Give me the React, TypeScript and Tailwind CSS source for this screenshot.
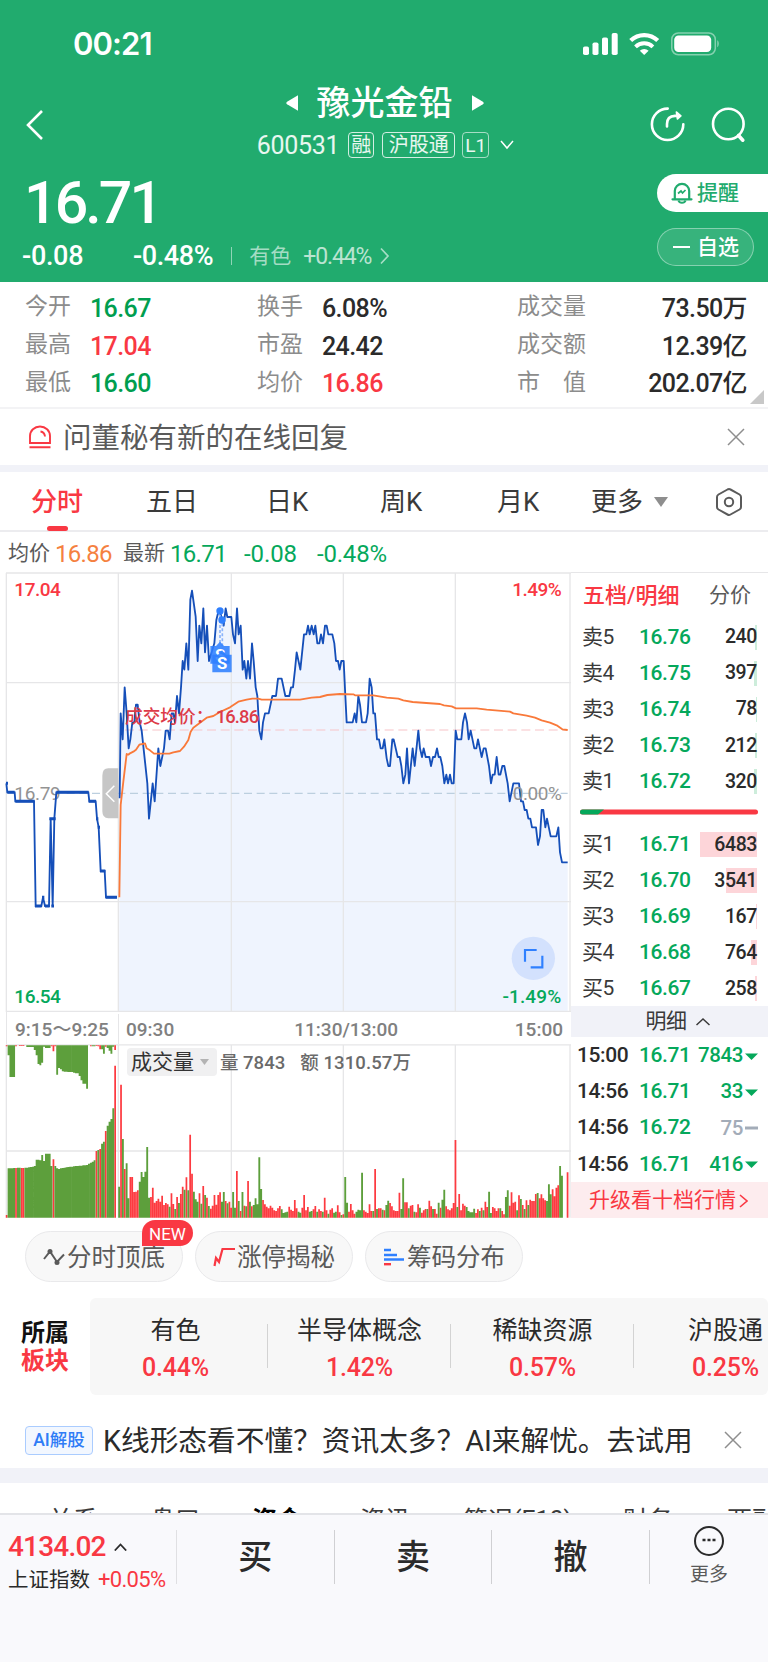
import { useMemo } from 'react';
import clsx from 'clsx';

type Tone = 'up' | 'down' | 'flat';

const TONE: Record<Tone, string> = {
  up: 'text-[#f93843]',
  down: 'text-[#009e4f]',
  flat: 'text-[#2b2b2b]',
};

const STATS: { label: string; value: string; tone: Tone }[][] = [
  [
    { label: '今开', value: '16.67', tone: 'down' },
    { label: '换手', value: '6.08%', tone: 'flat' },
    { label: '成交量', value: '73.50万', tone: 'flat' },
  ],
  [
    { label: '最高', value: '17.04', tone: 'up' },
    { label: '市盈', value: '24.42', tone: 'flat' },
    { label: '成交额', value: '12.39亿', tone: 'flat' },
  ],
  [
    { label: '最低', value: '16.60', tone: 'down' },
    { label: '均价', value: '16.86', tone: 'up' },
    { label: '市 值', value: '202.07亿', tone: 'flat' },
  ],
];

const ASKS = [
  { label: '卖5', price: '16.76', volume: 240, bar: 2 },
  { label: '卖4', price: '16.75', volume: 397, bar: 3.5 },
  { label: '卖3', price: '16.74', volume: 78, bar: 1 },
  { label: '卖2', price: '16.73', volume: 212, bar: 2 },
  { label: '卖1', price: '16.72', volume: 320, bar: 3 },
];

const BIDS = [
  { label: '买1', price: '16.71', volume: 6483, bar: 57 },
  { label: '买2', price: '16.70', volume: 3541, bar: 31 },
  { label: '买3', price: '16.69', volume: 167, bar: 1 },
  { label: '买4', price: '16.68', volume: 764, bar: 6.5 },
  { label: '买5', price: '16.67', volume: 258, bar: 2 },
];

const TICKS = [
  { time: '15:00', price: '16.71', volume: 7843, down: true },
  { time: '14:56', price: '16.71', volume: 33, down: true },
  { time: '14:56', price: '16.72', volume: 75, down: false },
  { time: '14:56', price: '16.71', volume: 416, down: true },
];

const SECTORS = [
  { name: '有色', change: '0.44%' },
  { name: '半导体概念', change: '1.42%' },
  { name: '稀缺资源', change: '0.57%' },
  { name: '沪股通', change: '0.25%' },
];

// Chart coordinates are 3 units per pixel.
const AUCTION_LINE =
  '19,655 22,682 44,682 46,709 102,709 107,1023 124,1023 129,997 135,1023 147,1023 152,761 158,1023 163,761 169,682 265,682 268,709 287,709 291,761 296,787 302,918 314,918 318,997 350,997';

const PRICE_LINE =
  '359,700 362,445 368,523 374,367 380,445 386,550 391,523 397,472 403,472 408,419 413,419 419,472 425,497 442,655 447,761 458,655 464,709 475,550 481,603 492,550 497,497 504,497 509,523 515,445 520,445 525,472 531,393 537,445 543,367 548,288 553,314 559,235 565,314 571,104 576,77 587,155 593,288 598,182 604,235 610,130 615,262 621,182 627,288 635,262 643,235 649,165 655,140 660,138 666,165 671,182 677,130 682,156 694,156 699,208 705,235 711,130 716,208 722,182 728,314 733,288 739,341 744,288 750,341 756,235 761,288 767,367 772,393 778,497 784,523 789,472 795,445 806,445 817,393 828,393 834,341 845,341 856,393 868,393 873,367 879,367 885,314 890,262 901,314 912,208 919,208 924,182 929,208 935,182 941,208 946,182 952,235 958,235 963,208 969,235 975,182 980,182 985,208 997,208 1003,235 1008,288 1014,288 1019,314 1024,288 1031,288 1036,393 1040,472 1058,472 1064,445 1069,472 1075,393 1080,419 1086,472 1098,472 1103,445 1109,341 1115,367 1120,445 1125,445 1131,523 1137,523 1142,550 1148,550 1153,523 1160,580 1165,603 1170,603 1177,523 1181,523 1193,576 1199,576 1204,603 1210,655 1216,629 1221,550 1227,655 1238,550 1244,603 1255,497 1260,550 1266,576 1271,550 1277,576 1288,576 1293,603 1299,576 1305,576 1311,550 1316,576 1321,576 1327,603 1333,655 1339,629 1344,655 1350,629 1355,655 1361,655 1367,497 1372,523 1384,523 1389,472 1395,445 1401,472 1406,523 1412,497 1423,550 1429,550 1434,523 1445,576 1451,550 1457,550 1467,603 1473,655 1478,629 1484,629 1490,576 1496,629 1501,629 1507,603 1513,603 1523,655 1529,709 1540,655 1557,655 1563,709 1569,709 1574,735 1580,735 1585,761 1591,761 1596,787 1608,787 1614,840 1620,814 1625,735 1630,735 1636,787 1641,761 1652,814 1669,814 1675,787 1680,862 1686,892 1703,892';

const AVERAGE_LINE =
  '358,997 362,720 370,650 380,567 385,569 390,565 400,560 408,554 418,539 427,537 435,535 440,550 450,556 462,566 508,566 520,562 540,558 552,545 565,525 572,500 580,488 600,473 620,458 640,453 660,441 690,427 715,410 740,404 757,401 775,401 785,404 900,404 935,398 960,396 982,390 1020,387 1060,388 1065,391 1120,391 1160,398 1195,401 1210,406 1238,411 1320,417 1332,421 1355,424 1368,430 1430,430 1460,434 1530,440 1540,445 1580,452 1605,458 1625,466 1650,473 1670,481 1687,493 1703,495';

// One entry per minute: positive is an up bar, negative a down bar.
const VOLUME = [
  -93, 399, -236, 146, -163, -58, 122, 122, 77, 78, 82, -108, -137, -122, -138, -212, -60, 62, 90, 45,
  50, 57, 48, 66, 38, 44, 40, -33, 73, 41, -26, 62, -44, 71, 93, -84, 121, -82, 249, 132,
  -78, -55, -48, 73, -42, 95, -68, 60, -35, 27, 36, 68, 39, 68, 76, -48, -77, 50, -43, 48,
  30, -77, -30, 140, -50, 20, -77, 36, -34, 110, -48, 34, -38, -58, -40, -181, -86, 53, 40, 33,
  28, 36, 30, 22, 20, 28, 35, -25, -14, -16, -18, 33, 24, 20, 53, 28, -18, -15, 30, 68,
  22, 32, -18, -20, 25, 35, -18, 25, 20, -18, 60, 22, -12, 24, 28, -15, -18, 37, 16, -8,
  10, -122, -45, 18, 41, 22, 12, -18, -24, -22, -135, 22, 18, 14, 40, 20, -20, 146, -26, 28,
  28, -24, 22, -38, -51, 44, 34, 22, 20, 20, 75, -26, -118, 46, 46, -28, 36, 38, -18, 16,
  40, -30, 15, 22, 26, -26, 51, 34, -26, 26, 12, -45, 30, -54, -84, 34, 25, 22, 28, 44,
  233, -32, 71, 22, 42, 36, -32, -20, -16, -16, -27, 14, 25, -20, 30, -22, 48, 32, -78, -14,
  32, 28, 20, 28, -28, 20, 10, -62, -82, 36, 76, 45, 48, -22, 67, -56, 38, -26, 52, -38,
  54, 50, 50, 71, -74, 58, 70, 58, 52, -50, -100, -70, 85, 64, 90, 97, -155, -126, 0, 0,
  136,
];

const AUCTION_MATCHED = [
  8, -148, -148, -148, -149, 149, -150, -150, 149, 149, -150, -150, -151, -152, -153, -155, -174, -174, -172, -188,
  -170, -192, -192, -192, -155, 175, -155, -148, -146, -148, -149, -150, -151, -152, -153, -153, -154, -155, -155, -156,
  -156, -157, -157, -158, -162, -165, -168, -172, 200, -203, 206, -222, -228, 260, -276, -288, -296, -328, 456,
];

const AUCTION_UNMATCHED = [
  3, -30, -95, -95, -95, 3, 0, 2, 2, 2, 0, -5, -5, -5, -5, -14, -30, -56, -60, -52,
  -4, -8, -8, -8, 3, 18, 3, -88, -68, -72, -78, -79, -79, -80, -80, -80, -82, -84, -84, -92,
  -105, -115, -115, -130, 0, 3, -3, -3, 2, 3, 12, -12, -25, 4, -8, -16, -25, -4, 14,
];

function bars(values: number[], x0: number, step: number, y: number, dir: 1 | -1, up: boolean) {
  return values
    .map((v, i) => ((up ? v > 0 : v < 0) ? `M${(x0 + i * step).toFixed(1)} ${y}v${dir * Math.abs(v)}` : ''))
    .join('');
}

function StatusBar() {
  return (
    <div className="flex h-[88px] items-center justify-between pl-[73px] pr-[49px]">
      <span className="-mt-[2px] font-['Inter'] text-[31px] font-semibold leading-none tracking-[-0.9px]">00:21</span>
      <svg width="138" height="24" viewBox="0 0 138 24" fill="#fff">
        <rect x="2" y="14.500" width="6" height="8.500" rx="1.800" />
        <rect x="11.500" y="10.500" width="6" height="12.500" rx="1.800" />
        <rect x="21" y="5.500" width="6" height="17.500" rx="1.800" />
        <rect x="30.700" y="1" width="6" height="22" rx="1.800" />
        <path d="M63.200 23 58.800 18.700a6.300 6.300 0 0 1 8.800 0z" />
        <path d="M54.500 14.800a12.400 12.400 0 0 1 17.400 0" fill="none" stroke="#fff" strokeWidth="3.900" />
        <path d="M49.700 8.600a19.300 19.300 0 0 1 27 0" fill="none" stroke="#fff" strokeWidth="4.200" />
        <rect x="90.800" y="1" width="43.500" height="21.800" rx="6.500" fill="none" stroke="#fff" strokeOpacity=".45" strokeWidth="1.500" />
        <rect x="93.200" y="3.500" width="37" height="16.600" rx="4.300" />
        <path d="M136.300 8.200v7c1.800-.6 2-6.300 0-7z" fillOpacity=".5" />
      </svg>
    </div>
  );
}

function Header() {
  return (
    <header className="h-[282px] bg-[#21ab6e] text-white">
      <StatusBar />
      <div className="flex h-[77px] items-start">
        <svg className="ml-[24px] mt-[21px]" width="22" height="32" viewBox="0 0 22 32" fill="none" stroke="#fff" strokeWidth="2.600">
          <path d="M18 2 4 16l14 14" />
        </svg>
        <div className="ml-[150px] flex w-[382px] flex-col items-center">
          <div className="-ml-[5px] flex h-[30px] items-center gap-[19px]">
            <svg width="12" height="18" viewBox="0 0 11 16" fill="#fff"><path d="M11 1v14L1 9.200Q-.5 8 1 6.800z" /></svg>
            <h1 className="text-[34px] font-medium leading-[32px]">豫光金铅</h1>
            <svg width="12" height="18" viewBox="0 0 11 16" fill="#fff"><path d="M0 1v14l10-5.800q1.500-1.200 0-2.400z" /></svg>
          </div>
          <div className="mt-[14px] -ml-[2px] flex h-[26px] items-center text-[20px] leading-none text-white/90">
            <span className="mt-px text-[25px] tracking-[-0.3px]">600531</span>
            <span className="ml-[9px] flex h-[26px] w-[26px] items-center justify-center rounded border border-white/80">融</span>
            <span className="ml-[8px] flex h-[26px] w-[73px] items-center justify-center rounded border border-white/80">沪股通</span>
            <span className="ml-[7px] flex h-[26px] w-[27px] items-center justify-center rounded border border-white/60 text-[19px]">L1</span>
            <svg className="ml-[10px]" width="16" height="12" viewBox="0 0 16 12" fill="none" stroke="#fff" strokeWidth="1.500">
              <path d="m2 2 6 7 6-7" />
            </svg>
          </div>
        </div>
        <svg className="ml-[71px] mt-[18px]" width="100" height="38" viewBox="0 0 100 38" fill="none" stroke="#fff" strokeWidth="2.600" strokeLinecap="round">
          <path d="M18.700 2.600A15.700 15.700 0 1 0 34.300 18.300" />
          <path d="M18 20.500v-2.500q0-7.700 8-8.100h4" />
          <path d="M27.500 6.200 31.800 9.900 28.500 12.800z" fill="#fff" strokeWidth="1.800" strokeLinejoin="round" />
          <circle cx="79.300" cy="18" r="15.300" />
          <path d="m89.500 29.500 4.300 4.700" strokeWidth="3.600" />
        </svg>
      </div>
      <div className="flex">
        <div className="flex-1">
          <div className="mt-[11px] pl-[24px] text-[59px] font-medium leading-[54px] tracking-[-2.9px]">16.71</div>
          <div className="mt-[14px] flex h-[24px] items-center pl-[22px] leading-none">
            <span className="w-[111px] text-[27px] font-medium tracking-[-0.3px]">-0.08</span>
            <span className="text-[27px] font-medium tracking-[-0.4px]">-0.48%</span>
            <span className="ml-[18px] h-[18px] w-px bg-white/50" />
            <span className="ml-[17px] text-[21px] text-white/60">有色</span>
            <span className="ml-[12px] text-[23px] tracking-[-1.1px] text-white/70">+0.44%</span>
            <svg className="ml-[8px]" width="12" height="18" viewBox="0 0 12 18" fill="none" stroke="#fff" strokeOpacity=".6" strokeWidth="1.700">
              <path d="m2 1.500 7 7.500-7 7.500" />
            </svg>
          </div>
        </div>
        <div className="flex w-[111px] flex-col text-[21px] font-medium leading-none">
          <div className="mt-[9px] flex h-[38px] items-center rounded-l-full bg-white pl-[14px] text-[#21ab6e]">
            <svg width="22" height="24" viewBox="0 0 22 24" fill="none" stroke="#21ab6e" strokeWidth="2.200">
              <path d="M3.800 18V10a7.200 7.200 0 0 1 14.400 0v8M1.500 18.300h19" strokeLinecap="round" />
              <path d="M7.500 19.500c1 3 6 3 7 0" />
              <path d="m7 12.500 3-2.500 1.500 2 3-3" strokeWidth="1.700" />
            </svg>
            <span className="ml-[4px]">提醒</span>
          </div>
          <div className="mt-[16px] flex h-[38px] w-[97px] items-center rounded-full border-[1.5px] border-white/40 bg-white/10 pl-[15px]">
            <span className="h-[2px] w-[17px] bg-white" />
            <span className="ml-[7px]">自选</span>
          </div>
        </div>
      </div>
    </header>
  );
}

function Stats() {
  return (
    <section className="relative h-[127px] border-b-2 border-[#f3f3f5] pt-[6px] text-[23px] leading-none">
      {STATS.map((row) => (
        <div key={row[0].label} className="flex h-[37.800px] items-center pl-[25px] pr-[21px]">
          {row.map((cell, i) => (
            <div key={cell.label} className={clsx('flex items-center', i === 0 && 'w-[232px]', i === 1 && 'w-[260px]', i === 2 && 'flex-1 justify-between')}>
              <span className={clsx('flex text-[#8c8c8c]', i < 2 && 'w-[65px]', i === 2 && 'w-[69px] justify-between')}>
                {cell.label.split(' ').map((part) => <span key={part}>{part}</span>)}
              </span>
              <span className={clsx('mt-[3px] text-[25px] font-medium tracking-[-0.6px]', TONE[cell.tone])}>{cell.value}</span>
            </div>
          ))}
        </div>
      ))}
      <svg className="absolute bottom-[3px] right-[4px]" width="14" height="14" fill="#c8c8c8"><path d="M14 0v14H0z" /></svg>
    </section>
  );
}

function CloseIcon() {
  return (
    <svg width="18" height="18" viewBox="0 0 18 18" stroke="#8e8e8e" strokeWidth="1.500">
      <path d="m1 1 16 16M17 1 1 17" />
    </svg>
  );
}

function Notice() {
  return (
    <section className="flex h-[56px] items-center pl-[28px] pr-[23px]">
      <svg width="24" height="24" viewBox="0 0 24 24" fill="none" stroke="#f93843" strokeWidth="1.900">
        <path d="M2 18V11a10 9.500 0 0 1 20 0v7z" />
        <path d="M12.500 6.500q4 .5 4.500 5M1.500 22.300h21" />
      </svg>
      <span className="ml-[11px] mt-[4px] flex-1 text-[28.500px] leading-none text-[#5a5a5a]">问董秘有新的在线回复</span>
      <CloseIcon />
    </section>
  );
}

function PeriodTabs() {
  return (
    <nav className="flex h-[60px] items-center border-b-2 border-[#ececef] pl-[31px] pt-[2px] text-[26px] leading-none text-[#3a3a3a]">
      <span className="relative w-[115px] font-medium text-[#f93843]">
        分时
        <span className="absolute left-[16px] top-[37px] h-[5px] w-[21px] rounded-full bg-[#f93843]" />
      </span>
      <span className="w-[120px]">五日</span>
      <span className="w-[114px]">日K</span>
      <span className="w-[117px]">周K</span>
      <span className="w-[94px]">月K</span>
      <span>更多</span>
      <svg className="ml-[11px]" width="14" height="10" fill="#8e8e8e"><path d="M0 0h14L7 10z" /></svg>
      <svg className="ml-[47px]" width="28" height="30" viewBox="0 0 28 30" fill="none" stroke="#5a5a5a" strokeWidth="2">
        <path d="M12.500 2.500q1.500-.8 3 0l9 5q1.500.9 1.500 2.600v9.800q0 1.700-1.500 2.600l-9 5q-1.500.8-3 0l-9-5Q2 21.600 2 19.900v-9.800q0-1.700 1.500-2.600z" />
        <circle cx="14" cy="15" r="4.200" />
      </svg>
    </nav>
  );
}

function InfoLine() {
  return (
    <div className="flex h-[41px] items-center pl-[8px] pt-[2px] text-[24px] leading-none tracking-[-0.7px] text-[#05a85b]">
      <span className="text-[21px] tracking-normal text-[#5a5a5a]">均价</span>
      <span className="ml-[5px] w-[68px] text-[#f5813f]">16.86</span>
      <span className="text-[21px] tracking-normal text-[#5a5a5a]">最新</span>
      <span className="ml-[5px] w-[74px]">16.71</span>
      <span className="w-[73px] tracking-[-0.1px]">-0.08</span>
      <span className="tracking-[-0.2px]">-0.48%</span>
    </div>
  );
}

function SellMarker({ x, y }: { x: number; y: number }) {
  return (
    <g transform={`translate(${x} ${y})`}>
      <path d="M-29 5H-12L0 -8 12 5H29V58H-29z" fill="#2f80ff" fillOpacity=".88" />
      <text x="0" y="49" textAnchor="middle" className="fill-white text-[50px] font-bold">S</text>
    </g>
  );
}

function PriceChart() {
  return (
    <svg width="571" height="440" viewBox="0 21 1713 1320" className="block" fill="none">
      <path d={`M357 1340 ${PRICE_LINE} 1703,1340z`} fill="#eff4fe" />
      <g stroke="#e6e6e8" strokeWidth="4">
        <path d="M18 24H1713M18 353H1713M18 1010H1713M18 1339H1713" />
        <path d="M19 24V1341M355 24V1341M694 24V1341M1030 24V1341M1366 24V1341M1710 24V1341" />
      </g>
      <path d="M200 685H1703" stroke="#bccfdf" strokeWidth="3.500" strokeDasharray="24 14" />
      <path d="M375 495H1703" stroke="#f7c3c8" strokeWidth="3.500" strokeDasharray="27 14" />
      <text x="43" y="705" className="fill-[#939393] text-[57px] tracking-[-1px]">16.79</text>
      <polyline points={AUCTION_LINE} stroke="#154fb9" strokeWidth="5.500" />
      <path d="M18 655h6M22 682h22M46 709h58M105 1023h20M126 997h7M135 1023h14M148 761h19M154 1023h8M169 682h97M266 709h22M288 761h7M293 787h7M300 918h16M317 997h34" stroke="#154fb9" strokeWidth="9" />
      <path d="M355 610H325Q307 610 307 632V738Q307 760 325 760H355z" fill="#c6c6c6" />
      <path d="M343 662 319 686 343 710" stroke="#fff" strokeWidth="4.500" />
      <polyline points={PRICE_LINE} stroke="#154fb9" strokeWidth="5.500" strokeLinejoin="round" />
      <polyline points={AVERAGE_LINE} stroke="#f9793a" strokeWidth="5.500" strokeLinejoin="round" />
      <path d="M660 150V235M667 175V262" stroke="#8bb4fb" strokeWidth="5" strokeDasharray="9 6" />
      <circle cx="660" cy="138" r="11" fill="#2f80ff" />
      <circle cx="666" cy="165" r="11" fill="#2f80ff" />
      <SellMarker x={660} y={238} />
      <SellMarker x={666} y={264} />
      <text x="375" y="473" className="fill-[#dd3b48] text-[53px] font-medium">成交均价：</text>
      <text x="647" y="473" className="fill-[#dd3b48] text-[55px] font-medium tracking-[-2.500px]">16.86</text>
      <g className="text-[57px] font-medium tracking-[-1.500px]">
        <text x="43" y="93" className="fill-[#f93843]">17.04</text>
        <text x="43" y="1315" className="fill-[#05a85b]">16.54</text>
        <g textAnchor="end">
          <text x="1684" y="94" className="fill-[#f93843]">1.49%</text>
          <text x="1684" y="705" className="fill-[#939393] font-normal">0.00%</text>
          <text x="1684" y="1315" className="fill-[#05a85b] tracking-[0.4px]">-1.49%</text>
        </g>
      </g>
      <circle cx="1600" cy="1180" r="65" fill="#d3e1fd" />
      <path d="M1610 1155H1575V1190M1592 1207H1627V1172" stroke="#2f80ff" strokeWidth="6.500" />
    </svg>
  );
}

function VolumeChart() {
  const paths = useMemo(() => {
    const build = (up: boolean) =>
      bars(VOLUME, 357.5, 5.605, 638, -1, up) +
      bars(AUCTION_MATCHED, 20, 5.61, 638, -1, up) +
      bars(AUCTION_UNMATCHED, 20, 5.61, 121, 1, up);
    return { up: build(true), down: build(false) };
  }, []);

  return (
    <div className="relative h-[174px]">
      <svg width="571" height="174" viewBox="0 117 1713 522" className="block" fill="none">
        <path d="M18 119.500H1713M18 438H1713M19 119V638M355 119V638M694 119V638M1030 119V638M1366 119V638M1710 119V638" stroke="#e6e6e8" strokeWidth="4" />
        <path d={paths.up} stroke="#fd3a40" strokeWidth="5.200" />
        <path d={paths.down} stroke="#5d9f3c" strokeWidth="5.600" />
      </svg>
      <div className="absolute left-[127px] top-[4px] flex items-center leading-none text-[#6a6a6a]">
        <span className="flex h-[28px] w-[90px] items-center rounded bg-[#f0f0f1] pl-[4px] text-[21px] text-[#333]">
          成交量
          <svg className="ml-[6px]" width="9" height="6" fill="#b3b3b3"><path d="M0 0h9L4.500 6z" /></svg>
        </span>
        <span className="ml-[3px] mt-[2px] text-[18.500px] font-medium">量 7843</span>
        <span className="ml-[15px] mt-[2px] text-[18.500px] font-medium tracking-[0.1px]">额 1310.57万</span>
      </div>
    </div>
  );
}

function OrderRow({ label, price, volume, bar, ask }: { label: string; price: string; volume: number; bar: number; ask?: boolean }) {
  return (
    <div className="flex h-[36.100px] items-center pl-[11px] pr-[11px] pt-[2px]">
      <span className="w-[57px] text-[#3a3a3a]">{label}</span>
      <span className="font-medium text-[#05a85b]">{price}</span>
      <span className="relative ml-auto flex h-[25px] items-center justify-end font-medium text-[#2b2b2b]">
        <span className={clsx('absolute inset-y-0 right-0', ask ? 'bg-[#cdeddb]' : 'bg-[#fdd5d9]')} style={{ width: bar }} />
        <span className="relative text-[19.500px] tracking-[-0.4px]">{volume}</span>
      </span>
    </div>
  );
}

function OrderBook() {
  return (
    <aside className="flex h-[646px] w-[197px] flex-col border-t border-[#e6e6e8] text-[21px] leading-none tracking-[-0.4px]">
      <div className="flex h-[45px] items-center pl-[12px] tracking-normal">
        <span className="w-[126px] text-[22px] font-medium text-[#f93843]">五档/明细</span>
        <span className="text-[#5a5a5a]">分价</span>
      </div>
      {ASKS.map((row) => <OrderRow key={row.label} {...row} ask />)}
      <div className="flex h-[27px] items-center pl-[9px]">
        <svg width="178" height="6">
          <rect y=".5" width="178" height="5" rx="2.500" fill="#f93843" />
          <path d="M2.500 .5H24L18 5.500H2.500a2.500 2.500 0 0 1 0-5z" fill="#05a85b" />
        </svg>
      </div>
      {BIDS.map((row) => <OrderRow key={row.label} {...row} />)}
      <div className="flex h-[31px] items-center justify-center bg-[#f1f2f8] pl-[16px] text-[#3a3a3a]">
        明细
        <svg className="ml-[9px]" width="14" height="9" viewBox="0 0 14 9" fill="none" stroke="#3a3a3a" strokeWidth="1.500"><path d="m.5 8 6.500-6 6.500 6" /></svg>
      </div>
      {TICKS.map((tick, i) => (
        <div key={i} className="flex h-[36.200px] items-center pl-[6px] pr-[10px] pt-px font-medium">
          <span className="w-[62px] text-[#2b2b2b]">{tick.time}</span>
          <span className="text-[#05a85b]">{tick.price}</span>
          <span className={clsx('ml-auto text-[20.500px]', tick.down ? 'text-[#05a85b]' : 'text-[#a3acb8]')}>{tick.volume}</span>
          <svg className="ml-[2px]" width="13" height="8" viewBox="0 0 13 8">
            {tick.down ? <path d="M0 1.500h13L6.500 8z" fill="#05a85b" /> : <path d="M0 2.500h13v3H0z" fill="#a3acb8" />}
          </svg>
        </div>
      ))}
      <div className="flex flex-1 items-center bg-[#fdecee] pl-[18px] pt-[2px] tracking-normal text-[#f93843]">
        升级看十档行情
        <svg className="ml-[3px]" width="9" height="14" viewBox="0 0 9 14" fill="none" stroke="#f93843" strokeWidth="1.600"><path d="m1 1 7 6-7 6" /></svg>
      </div>
    </aside>
  );
}

function Market() {
  return (
    <section className="flex">
      <div className="w-[571px]">
        <PriceChart />
        <div className="ml-[6px] flex h-[32px] items-center border-l border-[#e6e6e8] pt-[2px] text-[19px] font-medium leading-none text-[#808080]">
          <span className="h-full w-[112px] whitespace-nowrap border-r border-[#e6e6e8] pl-[8px] leading-[31px]">9:15～9:25</span>
          <span className="pl-[7px]">09:30</span>
          <span className="ml-[120px]">11:30/13:00</span>
          <span className="ml-auto pr-[8px]">15:00</span>
        </div>
        <VolumeChart />
      </div>
      <OrderBook />
    </section>
  );
}

function Shortcuts() {
  const pill = 'relative flex h-[51px] w-[158px] items-center rounded-full border border-[#e9e9eb] bg-[#f8f8f8] pl-[17px]';
  return (
    <section className="flex h-[80px] gap-[12px] pl-[25px] pt-[13px] text-[24.500px] leading-none text-[#5a5a5a]">
      <div className={pill}>
        <svg width="22" height="18" viewBox="0 0 22 18" fill="none" stroke="#5a5a5a" strokeWidth="2">
          <path d="M1 11 7 3.500l7 10.500 7-7.500" />
          <circle cx="7" cy="3.500" r="2.500" fill="#5a5a5a" stroke="none" />
          <circle cx="14" cy="14.500" r="2.500" fill="#5a5a5a" stroke="none" />
        </svg>
        <span className="ml-[2px] mt-[3px]">分时顶底</span>
        <span className="absolute -top-[12px] left-[116px] flex h-[26px] w-[51px] items-center justify-center rounded-full rounded-bl-none bg-[#f93843] pt-[2px] text-[17px] text-white">NEW</span>
      </div>
      <div className={pill}>
        <svg width="22" height="20" viewBox="0 0 22 20" fill="none" stroke="#f93843" strokeWidth="2.200">
          <path d="M1.500 19 3 11l3 4L9.500 2H22" />
        </svg>
        <span className="ml-[2px] mt-[3px]">涨停揭秘</span>
      </div>
      <div className={pill}>
        <svg width="22" height="18" viewBox="0 0 22 18" strokeWidth="2.400">
          <path d="M1 2h7M1 7h13M1 11.500h20" stroke="#2f80ff" />
          <path d="M1 16.200h7" stroke="#f93843" />
        </svg>
        <span className="ml-[2px] mt-[3px]">筹码分布</span>
      </div>
    </section>
  );
}

function Sectors() {
  return (
    <section className="flex h-[97px]">
      <div className="flex w-[90px] flex-col pl-[21px] pt-[21px] text-[24px] font-bold leading-[28px] text-[#111]">
        <span>所属</span>
        <span className="text-[#f93843]">板块</span>
      </div>
      <div className="flex flex-1 overflow-hidden rounded-md bg-[#f7f7f7]">
        {SECTORS.map((sector, i) => (
          <div key={sector.name} className={clsx('relative flex shrink-0 flex-col items-center text-[25px] leading-none', i === 0 ? 'w-[178px] pr-[7px]' : 'w-[183px]')}>
            <span className="mt-[20px] text-[#2b2b2b]">{sector.name}</span>
            <span className="mt-[12px] font-medium tracking-[-0.2px] text-[#f93843]">{sector.change}</span>
            <span className="absolute right-0 top-[26px] h-[44px] w-px bg-[#d3d3d3]" />
          </div>
        ))}
      </div>
    </section>
  );
}

function AiPrompt() {
  return (
    <section className="flex h-[73px] items-center pl-[25px] leading-none">
      <span className="mt-[17px] flex h-[29px] w-[68px] items-center justify-center rounded border-[1.5px] border-[#aaccff] bg-[#f2f7ff] pt-px text-[17.500px] font-medium text-[#2f7cf6]">AI解股</span>
      <span className="ml-[10px] mt-[20px] w-[612px] whitespace-nowrap text-[28.700px] text-[#2b2b2b]">K线形态看不懂？资讯太多？AI来解忧。去试用</span>
      <span className="ml-[9px] mt-[16px]"><CloseIcon /></span>
    </section>
  );
}

function SectionTabs() {
  return (
    <nav className="flex h-[30px] items-start overflow-hidden whitespace-nowrap pl-[48px] pt-[25px] text-[25px] leading-none text-[#3a3a3a] *:shrink-0">
      <span className="w-[102px]">关系</span>
      <span className="w-[102px]">盘口</span>
      <span className="w-[108px] font-bold text-black">资金</span>
      <span className="w-[103px]">资讯</span>
      <span className="w-[160px]">简况(F10)</span>
      <span className="w-[104px]">财务</span>
      <span>两融</span>
    </nav>
  );
}

function TradeBar() {
  return (
    <footer className="flex h-[149px] items-start border-t-2 border-[#e3e4e8] bg-[#f9f9fc] pt-[15px] leading-none">
      <div className="h-[54px] w-[177px] border-r border-[#e0e0e3] pl-[8px]">
        <div className="mt-[3px] flex items-center gap-[8px] text-[28px] font-medium tracking-[-0.8px] text-[#f93843]">
          4134.02
          <svg width="13" height="8" viewBox="0 0 13 8" fill="none" stroke="#2b2b2b" strokeWidth="1.800"><path d="m.8 7.500 5.700-6 5.700 6" /></svg>
        </div>
        <div className="mt-[8px] flex items-center whitespace-nowrap text-[20.500px] text-[#2b2b2b]">
          上证指数
          <span className="ml-[8px] text-[22px] tracking-[-0.7px] text-[#f93843]">+0.05%</span>
        </div>
      </div>
      {['买', '卖', '撤'].map((action) => (
        <div key={action} className="flex h-[54px] w-[157.600px] items-center justify-center border-r border-[#d0d0d3] text-[34px] font-medium text-[#2b2b2b]">
          {action}
        </div>
      ))}
      <div className="-mt-[4px] flex flex-1 flex-col items-center text-[19px] text-[#5a5a5a]">
        <svg width="32" height="32" viewBox="0 0 32 32" fill="none" stroke="#2b2b2b" strokeWidth="2">
          <circle cx="16" cy="15" r="14" />
          <path d="M9.500 14h3M14.500 14h3M19.500 14h3" strokeWidth="2.600" />
        </svg>
        <span className="mt-[7px]">更多</span>
      </div>
    </footer>
  );
}

export default function App() {
  return (
    <div className="flex h-[1662px] w-[768px] flex-col overflow-hidden bg-white font-['Roboto','Noto_Sans_CJK_SC',sans-serif]">
      <Header />
      <Stats />
      <Notice />
      <div className="h-[7px] bg-[#f1f2f8]" />
      <PeriodTabs />
      <InfoLine />
      <div className="-mt-px">
        <Market />
      </div>
      <Shortcuts />
      <Sectors />
      <AiPrompt />
      <div className="h-[15px] bg-[#f1f2f8]" />
      <SectionTabs />
      <TradeBar />
    </div>
  );
}
